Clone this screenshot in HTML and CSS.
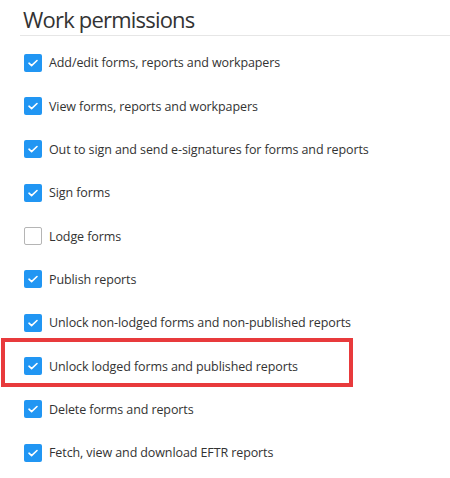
FILE: index.html
```html
<!DOCTYPE html>
<html>
<head>
<meta charset="utf-8">
<link rel="stylesheet" href="styles.css">
</head>
<body>
<section class="panel">
  <h2 class="title">Work permissions</h2>
  <ul class="perms">
    <li class="perm"><span class="box checked"><svg viewBox="0 0 18 18"><path d="M5 9.2l2.6 2.5L13 6.5"/></svg></span><span class="label">Add/edit forms, reports and workpapers</span></li>
    <li class="perm"><span class="box checked"><svg viewBox="0 0 18 18"><path d="M5 9.2l2.6 2.5L13 6.5"/></svg></span><span class="label">View forms, reports and workpapers</span></li>
    <li class="perm"><span class="box checked"><svg viewBox="0 0 18 18"><path d="M5 9.2l2.6 2.5L13 6.5"/></svg></span><span class="label">Out to sign and send e-signatures for forms and reports</span></li>
    <li class="perm"><span class="box checked"><svg viewBox="0 0 18 18"><path d="M5 9.2l2.6 2.5L13 6.5"/></svg></span><span class="label">Sign forms</span></li>
    <li class="perm"><span class="box"></span><span class="label">Lodge forms</span></li>
    <li class="perm"><span class="box checked"><svg viewBox="0 0 18 18"><path d="M5 9.2l2.6 2.5L13 6.5"/></svg></span><span class="label">Publish reports</span></li>
    <li class="perm"><span class="box checked"><svg viewBox="0 0 18 18"><path d="M5 9.2l2.6 2.5L13 6.5"/></svg></span><span class="label">Unlock non-lodged forms and non-published reports</span></li>
    <li class="perm highlight"><span class="box checked"><svg viewBox="0 0 18 18"><path d="M5 9.2l2.6 2.5L13 6.5"/></svg></span><span class="label">Unlock lodged forms and published reports</span></li>
    <li class="perm"><span class="box checked"><svg viewBox="0 0 18 18"><path d="M5 9.2l2.6 2.5L13 6.5"/></svg></span><span class="label">Delete forms and reports</span></li>
    <li class="perm"><span class="box checked"><svg viewBox="0 0 18 18"><path d="M5 9.2l2.6 2.5L13 6.5"/></svg></span><span class="label">Fetch, view and download EFTR reports</span></li>
  </ul>
</section>
</body>
</html>
```
FILE: styles.css
```css
html, body {
  margin: 0;
  padding: 0;
  background: #ffffff;
}
body {
  font-family: "Open Sans", "Noto Sans", sans-serif;
  color: #333333;
}
.panel {
  padding-left: 20px;
}
.title {
  margin: 0;
  padding: 4px 0 0 3px;
  height: 31px;
  font-size: 22px;
  font-weight: 400;
  letter-spacing: -0.8px;
  color: #333333;
  line-height: 31px;
  border-bottom: 1px solid #e6e6e6;
}
.perms {
  list-style: none;
  margin: 5px 0 0 0;
  padding: 0;
}
.perm {
  position: relative;
  display: flex;
  align-items: center;
  height: 43.35px;
  padding-left: 4px;
}
.box {
  width: 16px;
  height: 16px;
  border: 1px solid #b5b5b5;
  border-radius: 2px;
  background: #fff;
  flex: none;
  display: flex;
}
.box.checked {
  width: 18px;
  height: 18px;
  border: none;
  background: #2196f3;
}
.box svg {
  width: 18px;
  height: 18px;
}
.box path {
  fill: none;
  stroke: #ffffff;
  stroke-width: 1.6;
  stroke-linecap: round;
  stroke-linejoin: round;
}
.label {
  margin-left: 7px;
  font-size: 12.5px;
  letter-spacing: -0.1px;
}
.highlight::after {
  content: "";
  position: absolute;
  left: -19px;
  top: -6px;
  width: 344px;
  height: 41px;
  border: 4px solid #e83a3c;
}
```
